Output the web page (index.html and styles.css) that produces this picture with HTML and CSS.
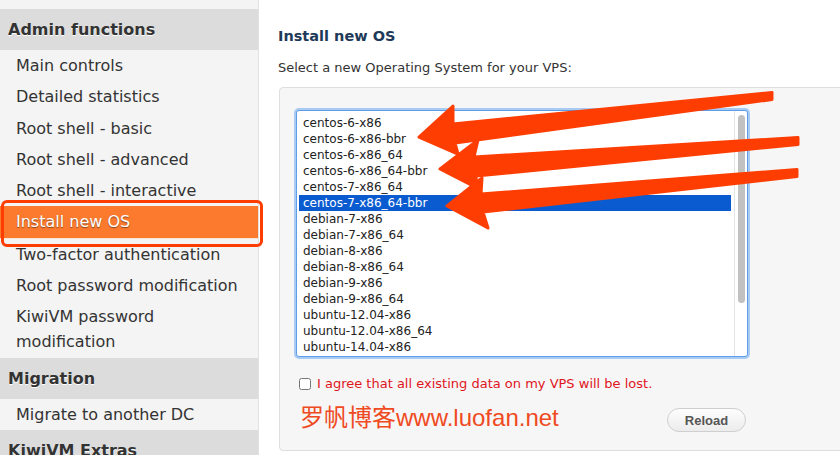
FILE: index.html
```html
<!DOCTYPE html>
<html lang="en">
<head>
    <meta charset="UTF-8">
    <meta name="viewport" content="width=device-width, initial-scale=1.0">
    <title>KiwiVM - Install new OS</title>
    <link rel="stylesheet" href="styles.css">
</head>
<body>
    <div class="layout">
        <aside class="sidebar">
            <h3 class="side-head">Admin functions</h3>
            <ul class="side-menu">
                <li><a href="#">Main controls</a></li>
                <li><a href="#">Detailed statistics</a></li>
                <li><a href="#">Root shell - basic</a></li>
                <li><a href="#">Root shell - advanced</a></li>
                <li><a href="#">Root shell - interactive</a></li>
                <li class="active"><a href="#">Install new OS</a></li>
                <li><a href="#">Two-factor authentication</a></li>
                <li><a href="#">Root password modification</a></li>
                <li><a href="#">KiwiVM password modification</a></li>
            </ul>
            <h3 class="side-head">Migration</h3>
            <ul class="side-menu">
                <li><a href="#">Migrate to another DC</a></li>
            </ul>
            <h3 class="side-head">KiwiVM Extras</h3>
        </aside>

        <main class="content">
            <h2 class="page-title">Install new OS</h2>
            <p class="intro">Select a new Operating System for your VPS:</p>

            <div class="panel">
                <div class="os-list">
                    <ul class="os-options">
                        <li>centos-6-x86</li>
                        <li>centos-6-x86-bbr</li>
                        <li>centos-6-x86_64</li>
                        <li>centos-6-x86_64-bbr</li>
                        <li>centos-7-x86_64</li>
                        <li class="selected">centos-7-x86_64-bbr</li>
                        <li>debian-7-x86</li>
                        <li>debian-7-x86_64</li>
                        <li>debian-8-x86</li>
                        <li>debian-8-x86_64</li>
                        <li>debian-9-x86</li>
                        <li>debian-9-x86_64</li>
                        <li>ubuntu-12.04-x86</li>
                        <li>ubuntu-12.04-x86_64</li>
                        <li>ubuntu-14.04-x86</li>
                    </ul>
                    <div class="scroll-track"><div class="scroll-thumb"></div></div>
                </div>

                <label class="agree">
                    <input type="checkbox">
                    <span>I agree that all existing data on my VPS will be lost.</span>
                </label>

                <div class="panel-foot">
                    <span class="watermark">罗帆博客www.luofan.net</span>
                    <button class="btn-reload" type="button">Reload</button>
                </div>
            </div>
        </main>
    </div>

    <!-- annotation arrows drawn over the screenshot -->
    <svg class="arrows" width="840" height="455" viewBox="0 0 840 455">
        <polygon points="419,137 453,106 453,124 772,92.5 772,99.5 455,143 458,154" />
        <polygon points="440,169 478,140 474,157 798,137.5 798,144.5 476,176 477,188" />
        <polygon points="447,206 482,178 481,194 797,169.5 797,176.5 483,212 488,228" />
    </svg>
</body>
</html>
```

FILE: styles.css
```css
* {
    box-sizing: border-box;
}
body {
    margin: 0;
    width: 840px;
    height: 455px;
    overflow: hidden;
    background: #fff;
    font-family: "DejaVu Sans", Verdana, sans-serif;
    color: #333;
}
.layout {
    display: flex;
    height: 455px;
}

/* sidebar */
.sidebar {
    width: 259px;
    flex-shrink: 0;
    padding-top: 9px;
    background: #f4f4f4;
    border-right: 1px solid #e2e2e2;
}
.side-head {
    margin: 0;
    padding: 0 8px;
    height: 41px;
    line-height: 41px;
    background: #dcdcdc;
    font-size: 16px;
    font-weight: bold;
    color: #333;
    text-shadow: 0 1px 0 #fff;
    white-space: nowrap;
}
.side-menu {
    list-style: none;
    margin: 0;
    padding: 0;
}
.side-menu li {
    position: relative;
}
.side-menu a {
    display: block;
    padding: 3px 16px 3.3px;
    line-height: 25px;
    font-size: 16px;
    color: #333;
    text-decoration: none;
}
.side-menu .active a {
    background: #fb7a2e;
    color: #fff;
    text-shadow: 0 1px 1px rgba(0, 0, 0, 0.45);
    border-bottom: 1px solid #fde3d2;
}
.side-menu .active::after {
    content: "";
    position: absolute;
    left: 1px;
    right: -5px;
    top: -6px;
    bottom: -8px;
    border: 3px solid #fe3d02;
    border-radius: 6px;
}

/* content */
.content {
    flex: 1;
    padding: 25px 0 0 19px;
    overflow: hidden;
}
.page-title {
    margin: 0;
    font-size: 14.5px;
    font-weight: bold;
    color: #1e3a58;
    line-height: 22px;
}
.intro {
    margin: 11px 0 0;
    font-size: 13px;
    line-height: 20px;
}
.panel {
    width: 620px;
    height: 364px;
    margin-top: 9px;
    margin-left: 1px;
    padding: 22px 16px 0;
    background: #f6f6f6;
    border: 1px solid #dedede;
    border-radius: 4px;
}
.os-list {
    display: flex;
    width: 452px;
    height: 247px;
    background: #fff;
    border: 1px solid #5f9de8;
    border-radius: 3px;
    box-shadow: 0 0 0 2px #a8cbf4;
}
.os-options {
    flex: 1;
    list-style: none;
    margin: 0;
    padding: 4px 3px 0 2px;
}
.os-options li {
    height: 16px;
    line-height: 16px;
    padding-left: 4px;
    font-size: 12px;
    color: #222;
    white-space: nowrap;
}
.os-options .selected {
    background: #0b5bd0;
    color: #fff;
}
.scroll-track {
    width: 13px;
    border-left: 1px solid #e4e4e4;
    padding: 4px 3px 0;
}
.scroll-thumb {
    width: 7px;
    height: 188px;
    border-radius: 4px;
    background: #c1c1c1;
}
.agree {
    display: flex;
    align-items: center;
    gap: 6px;
    margin: 19px 0 0 3px;
    font-size: 13px;
    color: #e0151d;
}
.agree input {
    margin: 0;
    width: 12px;
    height: 12px;
}
.panel-foot {
    display: flex;
    justify-content: space-between;
    align-items: flex-end;
    width: 450px;
    margin-top: 13px;
    padding-left: 4px;
}
.watermark {
    font-family: "Liberation Sans", "Noto Sans CJK SC", sans-serif;
    font-size: 24px;
    line-height: 28px;
    color: #ef4a22;
}
.btn-reload {
    width: 79px;
    height: 24px;
    border: 1px solid #cfcfcf;
    border-radius: 12px;
    background: linear-gradient(#fdfdfd, #ececec);
    font-family: "Liberation Sans", Arial, sans-serif;
    font-size: 13px;
    font-weight: bold;
    color: #555;
}

/* annotation overlay */
.arrows {
    position: absolute;
    left: 0;
    top: 0;
    pointer-events: none;
}
.arrows polygon {
    fill: #fe3d02;
    stroke: #fe3d02;
    stroke-width: 3;
    stroke-linejoin: round;
}
```
